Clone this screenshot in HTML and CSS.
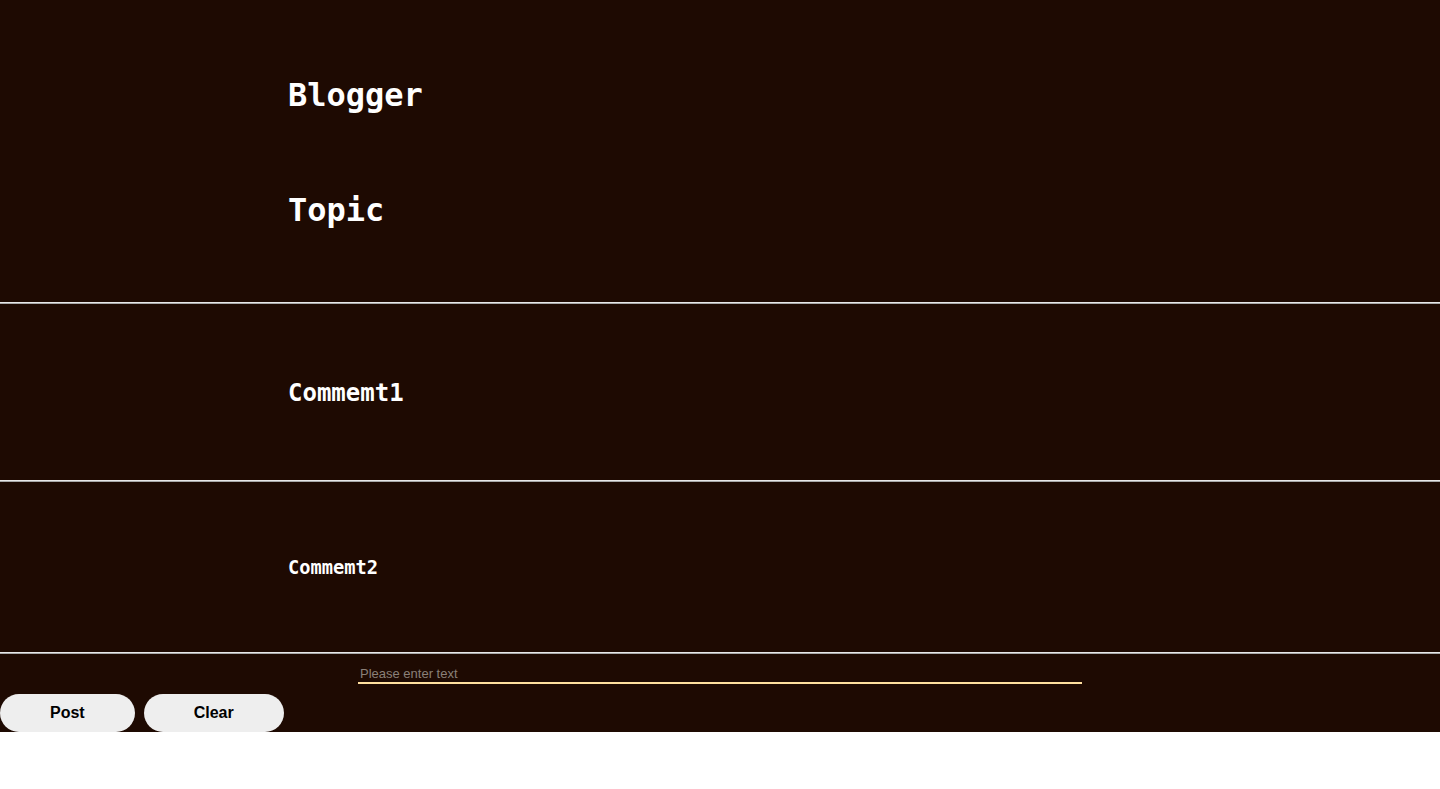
FILE: index.html
```html
<!DOCTYPE html>
<html lang="en">
<head>
<meta charset="utf-8">
<title>Blogger</title>
<link rel="stylesheet" href="styles.css">
</head>
<body>
<div class="page">
  <section class="post-head">
    <h1 class="title">Blogger</h1>
    <h1 class="title">Topic</h1>
  </section>
  <hr class="rule">
  <section class="comment">
    <h2 class="comment-1">Commemt1</h2>
  </section>
  <hr class="rule">
  <section class="comment comment-last">
    <h3 class="comment-2">Commemt2</h3>
  </section>
  <hr class="rule">
  <div class="composer">
    <input class="text-input" type="text" placeholder="Please enter text">
  </div>
  <div class="actions">
    <button class="btn">Post</button>
    <button class="btn">Clear</button>
  </div>
</div>
</body>
</html>
```

FILE: styles.css
```css
html, body {
  margin: 0;
  padding: 0;
  background: #ffffff;
}

.page {
  background: #1e0a02;
  display: flex;
  flex-direction: column;
}

.post-head {
  display: flex;
  flex-direction: column;
  gap: 75px;
  padding: 75px 0 72px 288px;
}

.title {
  margin: 0;
  font-family: "DejaVu Sans Mono", "Liberation Mono", monospace;
  font-weight: bold;
  font-size: 32px;
  line-height: 40px;
  color: #ffffff;
}

.rule {
  margin: 0;
  height: 0;
  border: 0;
  border-top: 1px solid #e8e8e8;
  border-bottom: 1px solid #a8a8a8;
}

.comment {
  padding: 74px 0 72px 288px;
}

.comment-last {
  padding-top: 75px;
  padding-bottom: 73px;
}

.comment-1 {
  margin: 0;
  font-family: "DejaVu Sans Mono", "Liberation Mono", monospace;
  font-weight: bold;
  font-size: 24px;
  line-height: 30px;
  color: #ffffff;
}

.comment-2 {
  margin: 0;
  font-family: "DejaVu Sans Mono", "Liberation Mono", monospace;
  font-weight: bold;
  font-size: 18.72px;
  line-height: 22px;
  color: #ffffff;
}

.composer {
  display: flex;
  justify-content: center;
  padding-top: 10px;
}

.text-input {
  box-sizing: border-box;
  width: 724px;
  height: 20px;
  padding: 1px 2px;
  border: 0;
  border-bottom: 2px solid #ffdf9e;
  background: transparent;
  color: #ffffff;
  font-family: "Liberation Sans", Arial, sans-serif;
  font-size: 13px;
  outline: none;
}

.text-input::placeholder {
  color: #8a8078;
}

.actions {
  display: flex;
  gap: 9px;
  padding-top: 10px;
}

.btn {
  height: 38px;
  padding: 0 50px;
  border: 0;
  border-radius: 19px;
  background: #eeeeee;
  color: #000000;
  font-family: "Liberation Sans", Arial, sans-serif;
  font-weight: bold;
  font-size: 16px;
}
```
